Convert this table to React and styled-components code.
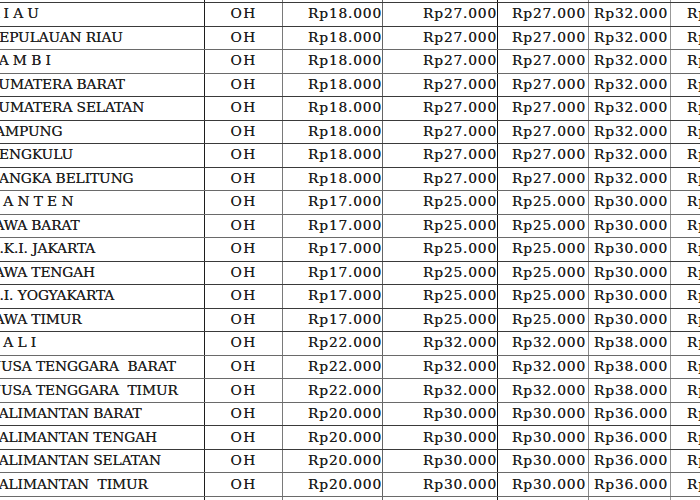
import React from "react";
import styled, { createGlobalStyle } from "styled-components";

const Global = createGlobalStyle`
  html, body { margin: 0; padding: 0; background: #fff; }
  body { width: 700px; height: 500px; overflow: hidden; }
  #root { width: 700px; height: 500px; overflow: hidden; }
`;

const Table = styled.div`
  margin-left: -14px;
  margin-top: -20.5px;
  width: 760px;
  display: flex;
  flex-direction: column;
  font-family: "DejaVu Serif", "Liberation Serif", serif;
  font-size: 13.8px;
  color: #1c1c1c;
  text-shadow: 0 0 0.5px #555;
`;

const Row = styled.div`
  display: grid;
  grid-template-columns: 219px 78px 100px 115px 91px 82px 75px;
  height: 23.52px;
  box-sizing: border-box;
  border-bottom: 1px solid ${(p) => (p.$dark ? "#3a3a3a" : "#6a6a6a")};
`;

const Cell = styled.div`
  box-sizing: border-box;
  display: flex;
  align-items: center;
  padding-bottom: 2px;
  white-space: pre;
  overflow: hidden;
  border-right: 1px solid ${(p) => p.$line || "#777"};
`;

const NameCell = styled(Cell)`
  padding-left: ${(p) => 3 + (p.$shift || 0)}px;
  letter-spacing: -0.1px;
  border-right-color: #1e1e1e;
`;

const UnitCell = styled(Cell)`
  justify-content: center;
  letter-spacing: 1.4px;
  border-right-color: #7a7a7a;
`;

const PriceCell = styled(Cell)`
  justify-content: ${(p) => (p.$left ? "flex-start" : "flex-end")};
  padding-right: ${(p) => p.$pr || 0}px;
  padding-left: ${(p) => p.$pl || 0}px;
  letter-spacing: 0.8px;
`;

const groups = {
  a: ["Rp18.000", "Rp27.000", "Rp27.000", "Rp32.000", "Rp37.000"],
  b: ["Rp17.000", "Rp25.000", "Rp25.000", "Rp30.000", "Rp35.000"],
  c: ["Rp22.000", "Rp32.000", "Rp32.000", "Rp38.000", "Rp43.000"],
  d: ["Rp20.000", "Rp30.000", "Rp30.000", "Rp36.000", "Rp41.000"],
};

const rows = [
  { name: "SUMATERA UTARA", g: "a", dark: true },
  { name: "R I A U", g: "a", dark: true },
  { name: "KEPULAUAN RIAU", g: "a" },
  { name: "J A M B I", g: "a" },
  { name: "SUMATERA BARAT", g: "a", dark: true },
  { name: "SUMATERA SELATAN", g: "a", dark: true },
  { name: "LAMPUNG", g: "a", dark: true, shift: -8 },
  { name: "BENGKULU", g: "a", dark: true },
  { name: "BANGKA BELITUNG", g: "a" },
  { name: "B A N T E N", g: "b" },
  { name: "JAWA BARAT", g: "b" },
  { name: "D.K.I. JAKARTA", g: "b", dark: true },
  { name: "JAWA TENGAH", g: "b", dark: true },
  { name: "D.I. YOGYAKARTA", g: "b", dark: true },
  { name: "JAWA TIMUR", g: "b", dark: true },
  { name: "B A L I", g: "c" },
  { name: "NUSA TENGGARA  BARAT", g: "c" },
  { name: "NUSA TENGGARA  TIMUR", g: "c" },
  { name: "KALIMANTAN BARAT", g: "d", dark: true },
  { name: "KALIMANTAN TENGAH", g: "d", dark: true },
  { name: "KALIMANTAN SELATAN", g: "d" },
  { name: "KALIMANTAN  TIMUR", g: "d" },
  { name: "KALIMANTAN UTARA", g: "d" },
];

export default function App() {
  return (
    <>
      <Global />
      <Table>
        {rows.map((r) => {
          const p = groups[r.g];
          return (
            <Row key={r.name} $dark={r.dark}>
              <NameCell $shift={r.shift}>{r.name}</NameCell>
              <UnitCell>OH</UnitCell>
              <PriceCell $line="#666">{p[0]}</PriceCell>
              <PriceCell $line="#111">{p[1]}</PriceCell>
              <PriceCell $line="#8a8a8a" $pr={2}>{p[2]}</PriceCell>
              <PriceCell $line="#999" $pr={2}>{p[3]}</PriceCell>
              <PriceCell $left $pl={16} $line="transparent">{p[4]}</PriceCell>
            </Row>
          );
        })}
      </Table>
    </>
  );
}
